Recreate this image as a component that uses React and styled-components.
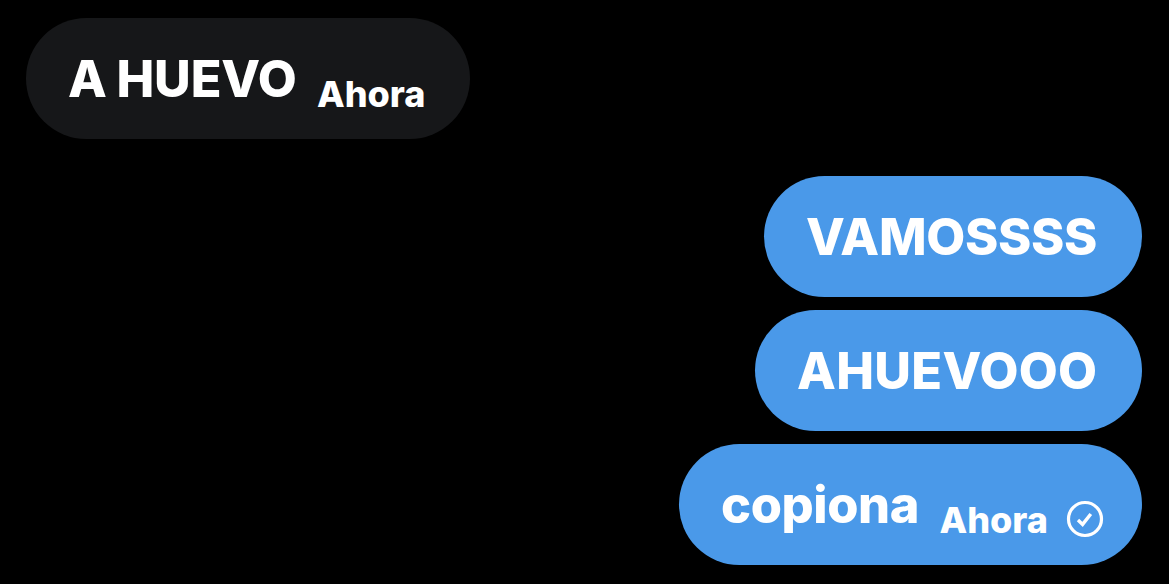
import React from 'react';
import styled, { createGlobalStyle } from 'styled-components';

const GlobalStyle = createGlobalStyle`
  * {
    box-sizing: border-box;
  }
  body {
    margin: 0;
    background: #000;
    overflow: hidden;
  }
`;

const Chat = styled.main`
  display: flex;
  flex-direction: column;
  gap: 13px;
  width: 1169px;
  height: 584px;
  padding: 18px 27px 0 26px;
  background: #000;
  color: #fff;
  font-family: Inter, sans-serif;
`;

const Bubble = styled.div`
  display: flex;
  align-items: center;
  align-self: ${(props) => (props.$sent ? 'flex-end' : 'flex-start')};
  width: ${(props) => props.$width}px;
  height: 121px;
  margin-bottom: ${(props) => (props.$sent ? 0 : 24)}px;
  padding: 0 0 2px 42px;
  border-radius: 61px;
  background: ${(props) => (props.$sent ? '#4a99e9' : '#161719')};
  white-space: nowrap;
`;

const Message = styled.span`
  margin-top: 2px;
  font-size: 50.5px;
  font-weight: 800;
  line-height: 60px;
  letter-spacing: ${(props) => props.$spacing || 0}px;
  word-spacing: -1px;
`;

const Meta = styled.span`
  display: flex;
  align-items: center;
  margin: 30px 0 0 20.4px;
`;

const Time = styled.time`
  margin-top: 2px;
  font-size: 36px;
  font-weight: 800;
  line-height: 44px;
`;

const CheckIcon = styled.svg`
  width: 38px;
  height: 38px;
  margin-left: 18.3px;
`;

const messages = [
  { text: 'A HUEVO', width: 444, spacing: -0.2, time: 'Ahora' },
  { text: 'VAMOSSSS', width: 378, spacing: -0.3, sent: true },
  { text: 'AHUEVOOO', width: 387, spacing: 0.3, sent: true },
  { text: 'copiona', width: 463, spacing: -0.4, sent: true, time: 'Ahora' },
];

const App = () => {
  return (
    <>
      <GlobalStyle />
      <Chat>
        {messages.map((message) => (
          <Bubble
            key={message.text}
            $sent={message.sent}
            $width={message.width}
          >
            <Message $spacing={message.spacing}>{message.text}</Message>
            {message.time && (
              <Meta>
                <Time>{message.time}</Time>
                {message.sent && (
                  <CheckIcon viewBox='0 0 38 38' fill='none' stroke='#fff'>
                    <circle cx='19' cy='19' r='16.5' strokeWidth='3.2' />
                    <path d='M12 20l4.6 4.4 8.2-10.4' strokeWidth='3.4' />
                  </CheckIcon>
                )}
              </Meta>
            )}
          </Bubble>
        ))}
      </Chat>
    </>
  );
};

export default App;
